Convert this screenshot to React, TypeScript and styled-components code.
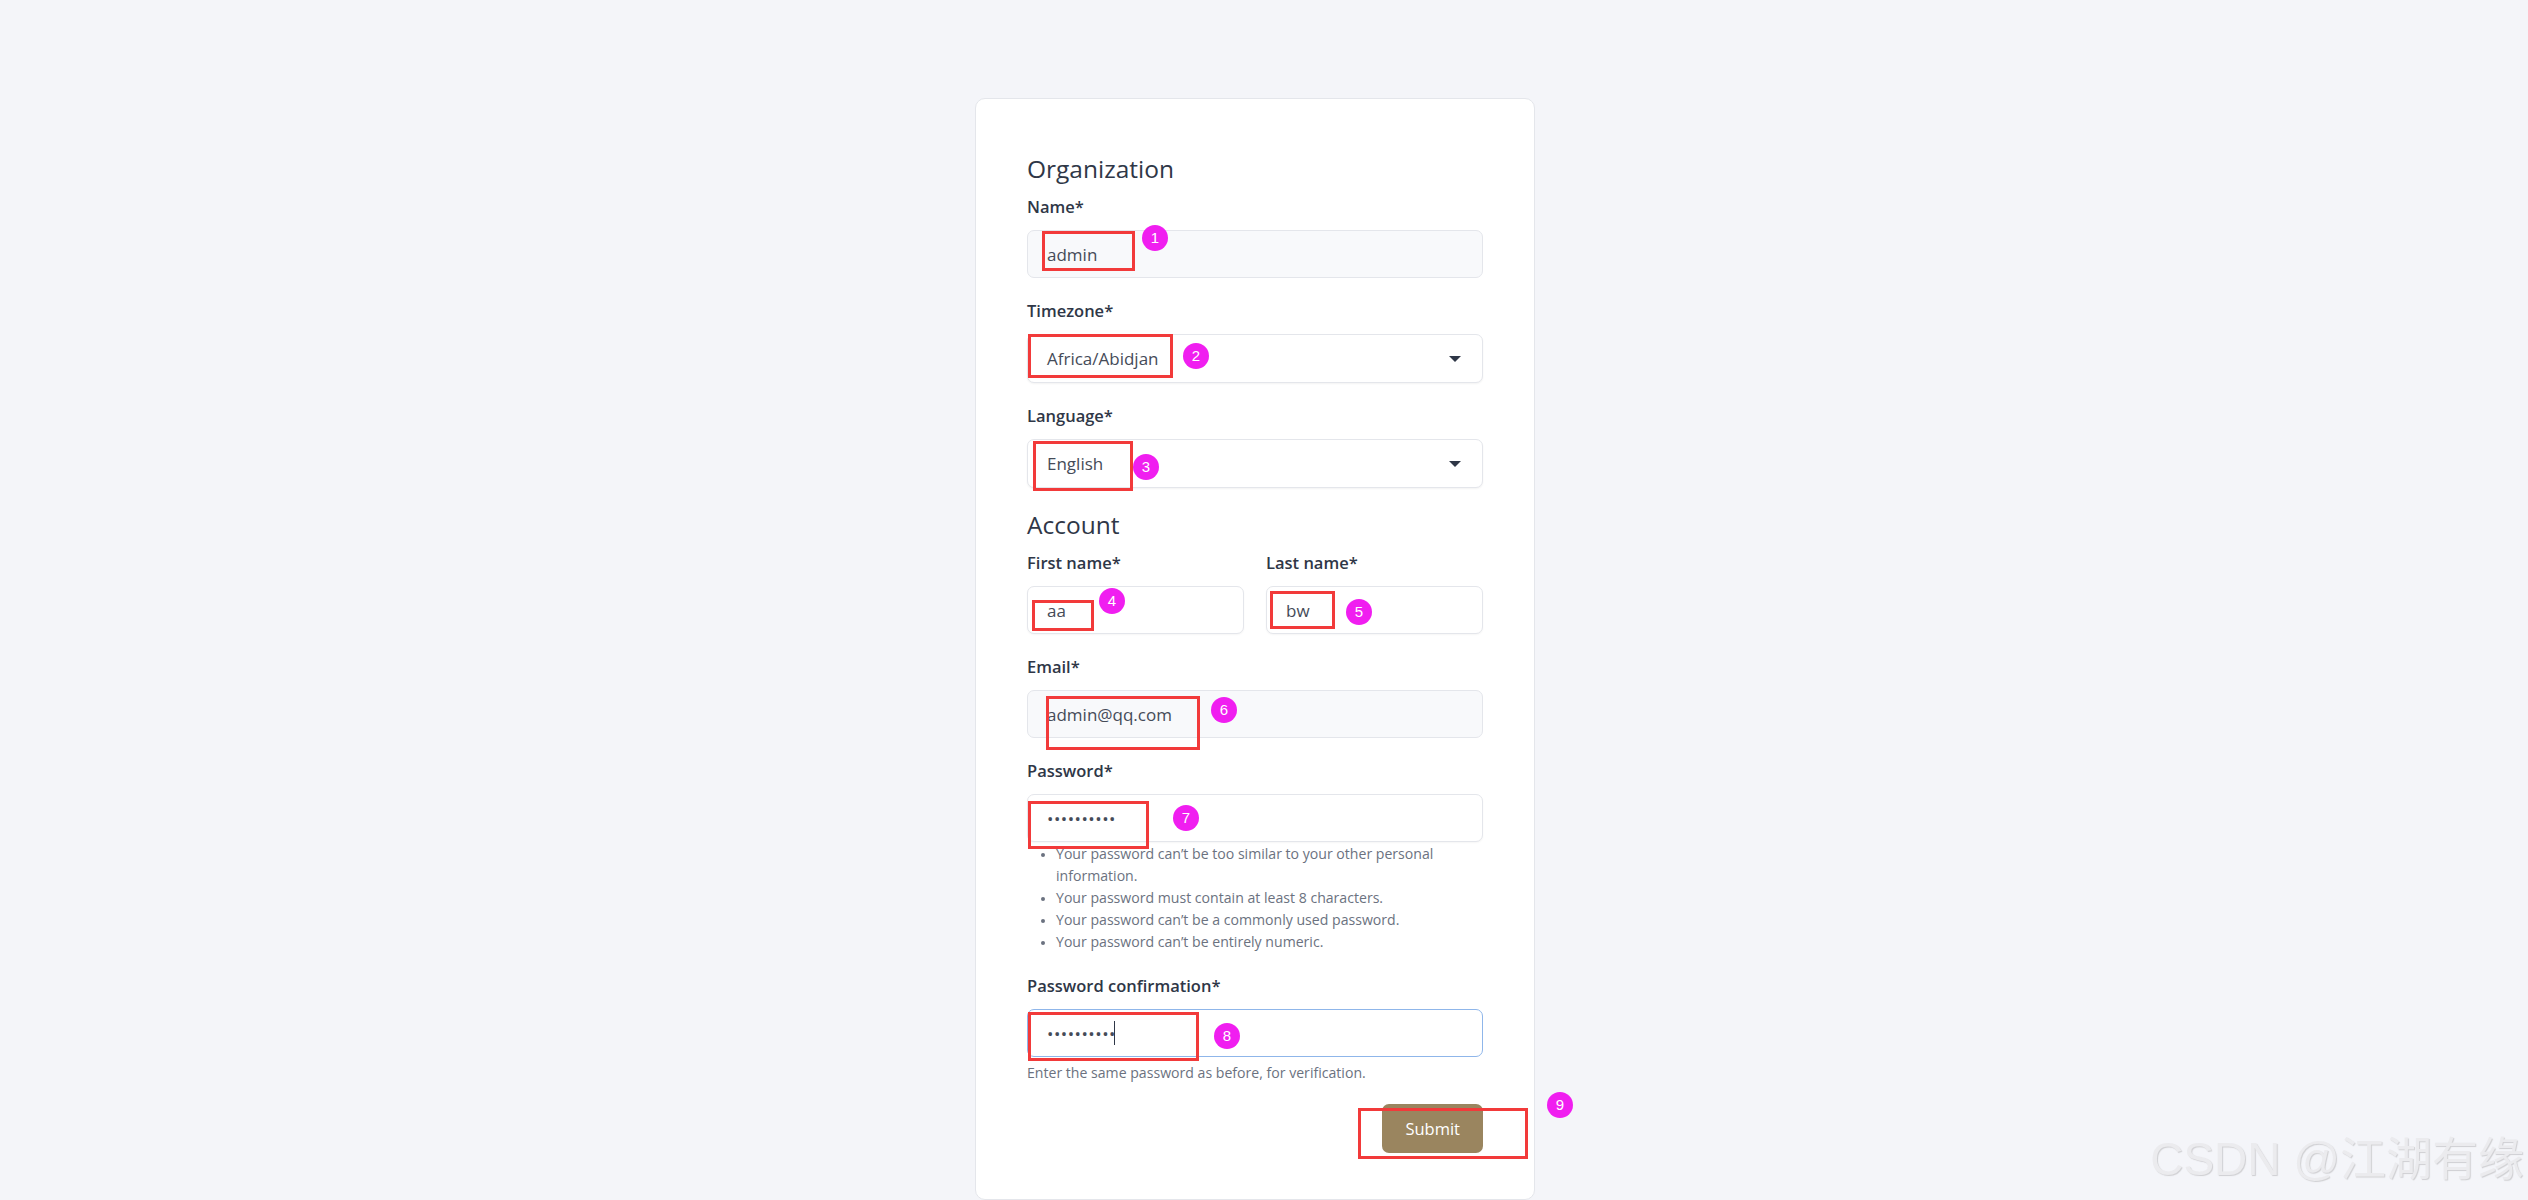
import styled, { createGlobalStyle } from "styled-components";

const GlobalStyle = createGlobalStyle`
    html, body {
        margin: 0;
        padding: 0;
        background-color: #f4f5f9;
    }
    body {
        font-family: "Open Sans", "Noto Sans", sans-serif;
        color: #2f3747;
    }
`;

const Page = styled.div`
    min-height: 100vh;
    display: flex;
    justify-content: center;
    align-items: flex-start;
    padding: 98px 18px 0 0;
    box-sizing: border-box;
    overflow: hidden;
`;

const Card = styled.form`
    position: relative;
    width: 560px;
    box-sizing: border-box;
    background-color: #ffffff;
    border: 1px solid #e4e6eb;
    border-radius: 10px;
    padding: 54px 51px 46px 51px;
`;

const SectionTitle = styled.h2`
    margin: 0 0 10px 0;
    font-size: 24.5px;
    line-height: 32px;
    font-weight: 500;
    color: #2f3747;
`;

const Field = styled.div`
    margin-bottom: 21px;
`;

const Row = styled.div`
    display: grid;
    grid-template-columns: 1fr 1fr;
    gap: 22px;
`;

const Label = styled.label`
    display: block;
    font-size: 16.5px;
    line-height: 24px;
    font-weight: 600;
    color: #2f3747;
    margin-bottom: 11px;
`;

const Input = styled.input<{ $readOnly?: boolean; $focused?: boolean }>`
    display: block;
    width: 100%;
    height: 48px;
    box-sizing: border-box;
    padding: 0 19px;
    font-family: "Open Sans", sans-serif;
    font-size: 17px;
    font-weight: 400;
    color: #454b58;
    background-color: ${(p) => (p.$readOnly ? "#f8f9fb" : "#ffffff")};
    border: 1px solid ${(p) => (p.$focused ? "#8fb6ea" : "#e4e6eb")};
    border-radius: 7px;
    outline: none;
    box-shadow: ${(p) => (p.$readOnly || p.$focused ? "none" : "0 1px 2px rgba(0, 0, 0, 0.04)")};
    letter-spacing: ${(p) => (p.type === "password" ? "0.5px" : "0")};
    caret-color: #2f3747;
`;

const SelectBox = styled.div`
    display: flex;
    align-items: center;
    justify-content: space-between;
    height: 49px;
    box-sizing: border-box;
    padding: 0 21px 0 19px;
    font-size: 17px;
    color: #454b58;
    background-color: #ffffff;
    border: 1px solid #e4e6eb;
    border-radius: 7px;
    box-shadow: 0 1px 2px rgba(0, 0, 0, 0.05);
`;

const Caret = styled.span`
    width: 0;
    height: 0;
    border-left: 6px solid transparent;
    border-right: 6px solid transparent;
    border-top: 6px solid #2f3747;
`;

const Cursor = styled.span`
    position: absolute;
    left: 87px;
    top: 12px;
    width: 1px;
    height: 24px;
    background-color: #2f3747;
`;

const PasswordWrap = styled.div`
    position: relative;
`;

const HelpList = styled.ul`
    margin: 1px 0 21px 0;
    padding: 0 0 0 29px;
    font-size: 14.1px;
    line-height: 22px;
    color: #6b7280;
    li::marker {
        color: #6b7280;
        font-size: 11px;
    }
`;

const HelpText = styled.div`
    margin-top: 5px;
    font-size: 14.1px;
    line-height: 22px;
    color: #6b7280;
`;

const Actions = styled.div`
    display: flex;
    justify-content: flex-end;
    margin-top: 20px;
`;

const SubmitButton = styled.button`
    height: 49px;
    padding: 0 23px;
    font-family: "Open Sans", sans-serif;
    font-size: 16.5px;
    font-weight: 500;
    color: #ffffff;
    background-color: #9a855f;
    border: none;
    border-radius: 7px;
`;

const MarkBox = styled.div`
    position: absolute;
    box-sizing: border-box;
    border: 3px solid #f23a3a;
    pointer-events: none;
`;

const MarkNum = styled.div`
    position: absolute;
    width: 26px;
    height: 26px;
    border-radius: 50%;
    background-color: #f01ef0;
    color: #ffffff;
    font-family: "Liberation Sans", Arial, sans-serif;
    font-size: 15px;
    line-height: 26px;
    text-align: center;
`;

const Watermark = styled.div`
    position: fixed;
    right: 4px;
    bottom: 12px;
    font-family: "Liberation Sans", "Noto Sans CJK SC", sans-serif;
    font-size: 46px;
    color: #ebebee;
    text-shadow: 1px 1px 1px #cfcfd2;
    white-space: nowrap;
`;

// annotation boxes and numbers, positioned relative to the card
const marks = [
    { n: 1, box: [66, 132, 93, 40], dot: [166, 126] },
    { n: 2, box: [52, 235, 145, 44], dot: [207, 244] },
    { n: 3, box: [57, 342, 100, 50], dot: [157, 355] },
    { n: 4, box: [56, 501, 62, 31], dot: [123, 489] },
    { n: 5, box: [294, 492, 65, 38], dot: [370, 500] },
    { n: 6, box: [70, 597, 154, 54], dot: [235, 598] },
    { n: 7, box: [52, 702, 121, 48], dot: [197, 706] },
    { n: 8, box: [52, 913, 171, 49], dot: [238, 924] },
    { n: 9, box: [382, 1009, 170, 51], dot: [571, 993] },
];

export default function App() {
    return (
        <>
            <GlobalStyle />
            <Page>
                <Card onSubmit={(e) => e.preventDefault()}>
                    <SectionTitle>Organization</SectionTitle>
                    <Field>
                        <Label>Name*</Label>
                        <Input $readOnly readOnly value="admin" />
                    </Field>
                    <Field>
                        <Label>Timezone*</Label>
                        <SelectBox>
                            <span>Africa/Abidjan</span>
                            <Caret />
                        </SelectBox>
                    </Field>
                    <Field>
                        <Label>Language*</Label>
                        <SelectBox>
                            <span>English</span>
                            <Caret />
                        </SelectBox>
                    </Field>

                    <SectionTitle>Account</SectionTitle>
                    <Row>
                        <Field>
                            <Label>First name*</Label>
                            <Input readOnly value="aa" />
                        </Field>
                        <Field>
                            <Label>Last name*</Label>
                            <Input readOnly value="bw" />
                        </Field>
                    </Row>
                    <Field>
                        <Label>Email*</Label>
                        <Input $readOnly readOnly value="admin@qq.com" />
                    </Field>
                    <div>
                        <Label>Password*</Label>
                        <Input type="password" readOnly value="aaaaaaaaaa" />
                        <HelpList>
                            <li>Your password can’t be too similar to your other personal information.</li>
                            <li>Your password must contain at least 8 characters.</li>
                            <li>Your password can’t be a commonly used password.</li>
                            <li>Your password can’t be entirely numeric.</li>
                        </HelpList>
                    </div>
                    <div>
                        <Label>Password confirmation*</Label>
                        <PasswordWrap>
                            <Input $focused type="password" readOnly value="aaaaaaaaaa" />
                            <Cursor />
                        </PasswordWrap>
                        <HelpText>Enter the same password as before, for verification.</HelpText>
                    </div>
                    <Actions>
                        <SubmitButton type="submit">Submit</SubmitButton>
                    </Actions>

                    {marks.map((m) => (
                        <div key={m.n}>
                            <MarkBox
                                style={{ left: m.box[0], top: m.box[1], width: m.box[2], height: m.box[3] }}
                            />
                            <MarkNum style={{ left: m.dot[0], top: m.dot[1] }}>{m.n}</MarkNum>
                        </div>
                    ))}
                </Card>
            </Page>
            <Watermark>CSDN @江湖有缘</Watermark>
        </>
    );
}
